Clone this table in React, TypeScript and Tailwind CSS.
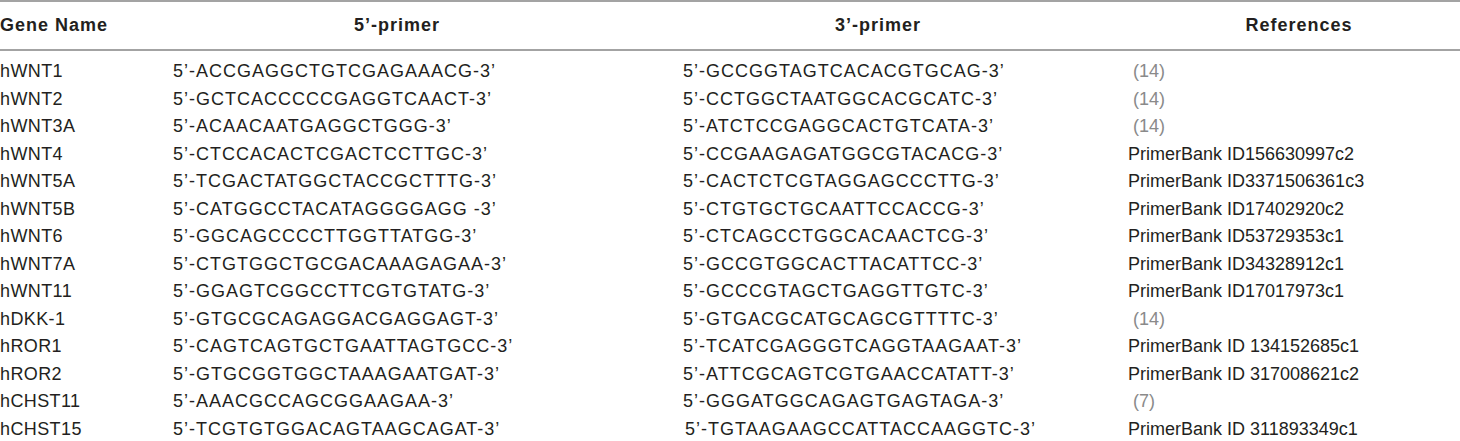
const rows: { gene: string; fwd: string; rev: string; ref: string; cite?: boolean }[] = [
  { gene: "hWNT1", fwd: "5’-ACCGAGGCTGTCGAGAAACG-3’", rev: "5’-GCCGGTAGTCACACGTGCAG-3’", ref: "(14)", cite: true },
  { gene: "hWNT2", fwd: "5’-GCTCACCCCCGAGGTCAACT-3’", rev: "5’-CCTGGCTAATGGCACGCATC-3’", ref: "(14)", cite: true },
  { gene: "hWNT3A", fwd: "5’-ACAACAATGAGGCTGGG-3’", rev: "5’-ATCTCCGAGGCACTGTCATA-3’", ref: "(14)", cite: true },
  { gene: "hWNT4", fwd: "5’-CTCCACACTCGACTCCTTGC-3’", rev: "5’-CCGAAGAGATGGCGTACACG-3’", ref: "PrimerBank ID156630997c2" },
  { gene: "hWNT5A", fwd: "5’-TCGACTATGGCTACCGCTTTG-3’", rev: "5’-CACTCTCGTAGGAGCCCTTG-3’", ref: "PrimerBank ID3371506361c3" },
  { gene: "hWNT5B", fwd: "5’-CATGGCCTACATAGGGGAGG -3’", rev: "5’-CTGTGCTGCAATTCCACCG-3’", ref: "PrimerBank ID17402920c2" },
  { gene: "hWNT6", fwd: "5’-GGCAGCCCCTTGGTTATGG-3’", rev: "5’-CTCAGCCTGGCACAACTCG-3’", ref: "PrimerBank ID53729353c1" },
  { gene: "hWNT7A", fwd: "5’-CTGTGGCTGCGACAAAGAGAA-3’", rev: "5’-GCCGTGGCACTTACATTCC-3’", ref: "PrimerBank ID34328912c1" },
  { gene: "hWNT11", fwd: "5’-GGAGTCGGCCTTCGTGTATG-3’", rev: "5’-GCCCGTAGCTGAGGTTGTC-3’", ref: "PrimerBank ID17017973c1" },
  { gene: "hDKK-1", fwd: "5’-GTGCGCAGAGGACGAGGAGT-3’", rev: "5’-GTGACGCATGCAGCGTTTTC-3’", ref: "(14)", cite: true },
  { gene: "hROR1", fwd: "5’-CAGTCAGTGCTGAATTAGTGCC-3’", rev: "5’-TCATCGAGGGTCAGGTAAGAAT-3’", ref: "PrimerBank ID 134152685c1" },
  { gene: "hROR2", fwd: "5’-GTGCGGTGGCTAAAGAATGAT-3’", rev: "5’-ATTCGCAGTCGTGAACCATATT-3’", ref: "PrimerBank ID 317008621c2" },
  { gene: "hCHST11", fwd: "5’-AAACGCCAGCGGAAGAA-3’", rev: "5’-GGGATGGCAGAGTGAGTAGA-3’", ref: "(7)", cite: true },
  { gene: "hCHST15", fwd: "5’-TCGTGTGGACAGTAAGCAGAT-3’", rev: "5’-TGTAAGAAGCCATTACCAAGGTC-3’", ref: "PrimerBank ID 311893349c1" },
];

export default function App() {
  return (
    <div className="w-[1460px] h-[441px] overflow-hidden bg-white font-['Liberation_Sans',Arial,sans-serif] text-[18px] text-[#231f20]">
      <div className="border-t-2 border-[#a3a3a3]">
        {/* header */}
        <div className="grid grid-cols-[173px_510px_445px_1fr] h-[49px] items-center border-b-2 border-[#a3a3a3] font-bold tracking-[1px]">
          <div>Gene Name</div>
          <div className="text-center pr-[62px]">5’-primer</div>
          <div className="text-center pr-[55px]">3’-primer</div>
          <div className="text-center pl-[10px]">References</div>
        </div>

        {/* body */}
        <div className="pt-[7px]">
          {rows.map((r, i) => (
            <div key={r.gene} className="grid grid-cols-[173px_510px_445px_1fr] h-[27.5px] items-center whitespace-pre">
              <div className="tracking-[0.4px]">{r.gene}</div>
              <div className="tracking-[1px]">{r.fwd}</div>
              <div className={i === rows.length - 1 ? "tracking-[1px] pl-[2px]" : "tracking-[1px]"}>{r.rev}</div>
              <div>{r.cite ? <span className="text-[#8a8a8a]"> {r.ref}</span> : r.ref}</div>
            </div>
          ))}
        </div>
      </div>
    </div>
  );
}
